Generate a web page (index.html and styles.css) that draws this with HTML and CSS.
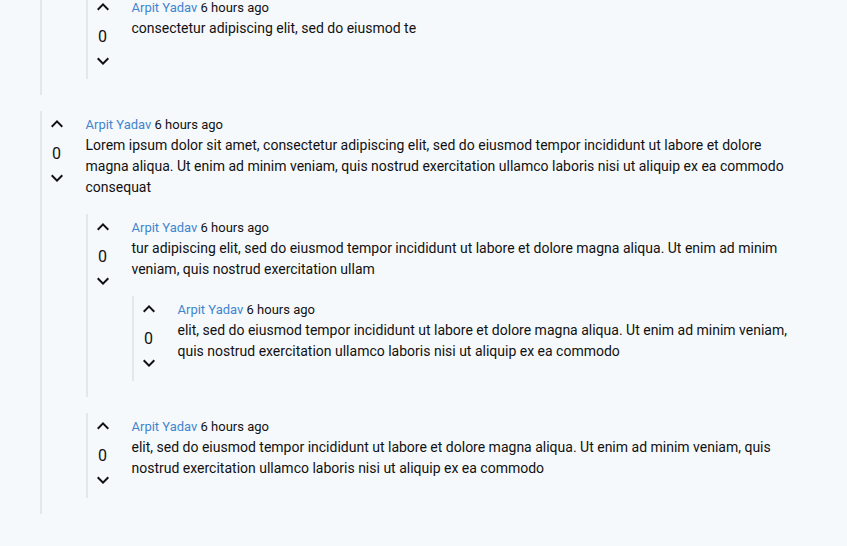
FILE: index.html
```html
<!DOCTYPE html>
<html>
<head>
<meta charset="utf-8">
<link rel="stylesheet" href="styles.css">
</head>
<body>
<main class="thread">
  <div class="comment">
    <div class="votes">
      <svg class="arrow" viewBox="0 0 24 24"><path d="M12 8l-6 6 1.41 1.41L12 10.83l4.59 4.58L18 14z"/></svg>
      <div class="count">0</div>
      <svg class="arrow" viewBox="0 0 24 24"><path d="M16.59 8.59L12 13.17 7.41 8.59 6 10l6 6 6-6z"/></svg>
    </div>
    <div class="content">
      <div class="meta"><a class="author">Arpit Yadav</a> <span class="time">6 hours ago</span></div>
      <p class="body">Lorem ipsum dolor sit amet, consectetur adipiscing elit, sed do eiusmod tempor incididunt ut labore et dolore magna aliqua. Ut enim ad minim veniam, quis nostrud exercitation ullamco laboris nisi ut aliquip ex ea commodo consequat</p>
      <div class="replies">
        <div class="comment">
          <div class="votes">
            <svg class="arrow" viewBox="0 0 24 24"><path d="M12 8l-6 6 1.41 1.41L12 10.83l4.59 4.58L18 14z"/></svg>
            <div class="count">0</div>
            <svg class="arrow" viewBox="0 0 24 24"><path d="M16.59 8.59L12 13.17 7.41 8.59 6 10l6 6 6-6z"/></svg>
          </div>
          <div class="content">
            <div class="meta"><a class="author">Arpit Yadav</a> <span class="time">6 hours ago</span></div>
            <p class="body">consectetur adipiscing elit, sed do eiusmod te</p>
          </div>
        </div>
      </div>
    </div>
  </div>

  <div class="comment">
    <div class="votes">
      <svg class="arrow" viewBox="0 0 24 24"><path d="M12 8l-6 6 1.41 1.41L12 10.83l4.59 4.58L18 14z"/></svg>
      <div class="count">0</div>
      <svg class="arrow" viewBox="0 0 24 24"><path d="M16.59 8.59L12 13.17 7.41 8.59 6 10l6 6 6-6z"/></svg>
    </div>
    <div class="content">
      <div class="meta"><a class="author">Arpit Yadav</a> <span class="time">6 hours ago</span></div>
      <p class="body">Lorem ipsum dolor sit amet, consectetur adipiscing elit, sed do eiusmod tempor incididunt ut labore et dolore magna aliqua. Ut enim ad minim veniam, quis nostrud exercitation ullamco laboris nisi ut aliquip ex ea commodo consequat</p>
      <div class="replies">
        <div class="comment">
          <div class="votes">
            <svg class="arrow" viewBox="0 0 24 24"><path d="M12 8l-6 6 1.41 1.41L12 10.83l4.59 4.58L18 14z"/></svg>
            <div class="count">0</div>
            <svg class="arrow" viewBox="0 0 24 24"><path d="M16.59 8.59L12 13.17 7.41 8.59 6 10l6 6 6-6z"/></svg>
          </div>
          <div class="content">
            <div class="meta"><a class="author">Arpit Yadav</a> <span class="time">6 hours ago</span></div>
            <p class="body">tur adipiscing elit, sed do eiusmod tempor incididunt ut labore et dolore magna aliqua. Ut enim ad minim veniam, quis nostrud exercitation ullam</p>
            <div class="replies">
              <div class="comment">
                <div class="votes">
                  <svg class="arrow" viewBox="0 0 24 24"><path d="M12 8l-6 6 1.41 1.41L12 10.83l4.59 4.58L18 14z"/></svg>
                  <div class="count">0</div>
                  <svg class="arrow" viewBox="0 0 24 24"><path d="M16.59 8.59L12 13.17 7.41 8.59 6 10l6 6 6-6z"/></svg>
                </div>
                <div class="content">
                  <div class="meta"><a class="author">Arpit Yadav</a> <span class="time">6 hours ago</span></div>
                  <p class="body">elit, sed do eiusmod tempor incididunt ut labore et dolore magna aliqua. Ut enim ad minim veniam, quis nostrud exercitation ullamco laboris nisi ut aliquip ex ea commodo</p>
                </div>
              </div>
            </div>
          </div>
        </div>
        <div class="comment">
          <div class="votes">
            <svg class="arrow" viewBox="0 0 24 24"><path d="M12 8l-6 6 1.41 1.41L12 10.83l4.59 4.58L18 14z"/></svg>
            <div class="count">0</div>
            <svg class="arrow" viewBox="0 0 24 24"><path d="M16.59 8.59L12 13.17 7.41 8.59 6 10l6 6 6-6z"/></svg>
          </div>
          <div class="content">
            <div class="meta"><a class="author">Arpit Yadav</a> <span class="time">6 hours ago</span></div>
            <p class="body">elit, sed do eiusmod tempor incididunt ut labore et dolore magna aliqua. Ut enim ad minim veniam, quis nostrud exercitation ullamco laboris nisi ut aliquip ex ea commodo</p>
          </div>
        </div>
      </div>
    </div>
  </div>
</main>
</body>
</html>
```

FILE: styles.css
```css
html, body {
  margin: 0;
  padding: 0;
  background: #f6f9fc;
}
body {
  font-family: Roboto, "Liberation Sans", sans-serif;
  color: #111;
  overflow: hidden;
  height: 546px;
}
.thread {
  max-width: 768px;
  margin: -109px auto 0;
  display: flex;
  flex-direction: column;
  gap: 16px;
}
.comment {
  display: flex;
  border-left: 2px solid #e3e8ef;
}
.votes {
  width: 30px;
  flex: none;
  display: flex;
  flex-direction: column;
  align-items: center;
  padding: 1px 0 6px;
  margin-right: 14px;
}
.arrow {
  width: 24px;
  height: 24px;
  fill: #111;
  display: block;
}
.count {
  font-size: 16px;
  line-height: 24px;
  margin-top: 6px;
}
.content {
  flex: 1;
  min-width: 0;
  padding-bottom: 16px;
}
.meta {
  padding-top: 4px;
  font-size: 13px;
  line-height: 20px;
}
.author {
  color: #3f85cf;
}
.time {
  color: #111;
}
.body {
  margin: 0 0 3px;
  font-size: 14px;
  line-height: 21px;
}
.replies {
  margin-top: 16px;
  display: flex;
  flex-direction: column;
  gap: 16px;
}
```
